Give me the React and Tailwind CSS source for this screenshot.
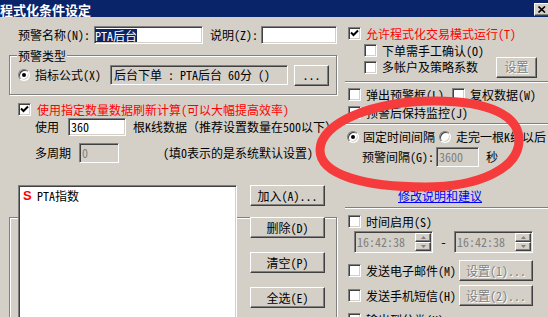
import React from "react";

const sunken =
  "border border-t-[#808080] border-l-[#808080] border-b-white border-r-white shadow-[inset_1px_1px_0_#404040,inset_-1px_-1px_0_#d4d0c8]";
const raised =
  "border border-t-white border-l-white border-b-[#404040] border-r-[#404040] shadow-[inset_-1px_-1px_0_#808080]";
const etched = "border border-[#808080] shadow-[inset_1px_1px_0_#fff,1px_1px_0_#fff]";
const grayText = "text-[#808080] [text-shadow:1px_1px_0_#fff]";

const Check = ({ checked }) => (
  <span className={`w-[13px] h-[13px] shrink-0 bg-white flex items-center justify-center ${sunken}`}>
    {checked && (
      <svg width="11" height="11" viewBox="0 0 11 11">
        <path d="M2 4.5 L4.5 7 L9 2.5" fill="none" stroke="#000" strokeWidth="2" />
      </svg>
    )}
  </span>
);

const Radio = ({ checked }) => (
  <span
    className={`w-[12px] h-[12px] shrink-0 rounded-full bg-white flex items-center justify-center ${sunken}`}
  >
    {checked && <span className="w-[4px] h-[4px] rounded-full bg-black" />}
  </span>
);

const Button = ({ children, className = "", disabled }) => (
  <div
    className={`h-[21px] shrink-0 bg-[#d4d0c8] flex items-center justify-center whitespace-nowrap ${raised} ${
      disabled ? grayText : ""
    } ${className}`}
  >
    {children}
  </div>
);

const Sep = ({ className = "" }) => (
  <div className={`h-[2px] border-t border-t-[#808080] border-b border-b-white ${className}`} />
);

const Spin = () => (
  <div className="w-[17px] h-full flex flex-col py-[1px] pr-[1px]">
    <div className={`flex-1 bg-[#d4d0c8] flex items-center justify-center ${raised}`}>
      <svg width="5" height="3" viewBox="0 0 5 3">
        <path d="M2.5 0 L5 3 L0 3Z" fill="#808080" />
      </svg>
    </div>
    <div className={`flex-1 bg-[#d4d0c8] flex items-center justify-center ${raised}`}>
      <svg width="5" height="3" viewBox="0 0 5 3">
        <path d="M0 0 L5 0 L2.5 3Z" fill="#808080" />
      </svg>
    </div>
  </div>
);

const TimeEdit = () => (
  <div className={`w-[79px] h-[22px] bg-[#d4d0c8] flex items-center ${sunken}`}>
    <span className="flex-1 pl-[2px] text-[#808080]">16:42:38</span>
    <Spin />
  </div>
);

const App = () => {
  return (
    <div className="relative w-[548px] h-[317px] overflow-hidden bg-[#d4d0c8] text-black text-[12px] leading-[14px] font-['Noto_Sans_Mono_CJK_SC','Noto_Sans_CJK_SC',sans-serif]">
      {/* title bar */}
      <div className="h-[17px] bg-[#0a246a] flex items-start justify-between">
        <span className="pt-[3px] text-white font-bold text-[13px] leading-[14px] whitespace-nowrap">
          程式化条件设定
        </span>
        <div className={`mt-[3px] -mr-[2px] w-[16px] h-[13px] bg-[#d4d0c8] flex items-center justify-center ${raised}`}>
          <svg width="8" height="7" viewBox="0 0 8 7">
            <path d="M0.5 0.5 L7 6.5 M7 0.5 L0.5 6.5" stroke="#000" strokeWidth="1.6" />
          </svg>
        </div>
      </div>

      <div className="flex items-start">
        {/* left side */}
        <div className="w-[343px] shrink-0 overflow-hidden whitespace-nowrap">
          <div className="mt-[9px] h-[18px] pl-[18px] flex items-center">
            <span className="w-[76px]">预警名称(N):</span>
            <div className={`w-[109px] h-[18px] bg-white flex items-center ${sunken}`}>
              <span className="bg-[#0a246a] text-white leading-[13px]">PTA后台</span>
            </div>
            <span className="ml-[7px] w-[51px]">说明(Z):</span>
            <div className={`w-[76px] h-[18px] bg-white ${sunken}`} />
          </div>

          <div className={`ml-[9px] mt-[11px] w-[328px] h-[40px] ${etched}`}>
            <div className="-mt-[8px] ml-[7px] w-fit px-[1px] bg-[#d4d0c8] leading-[15px]">预警类型</div>
            <div className="mt-[2px] h-[20px] pl-[8px] flex items-center">
              <Radio checked />
              <span className="ml-[5px] w-[75px]">指标公式(X)</span>
              <div className={`w-[178px] h-[20px] bg-[#d4d0c8] pl-[3px] flex items-center ${sunken}`}>
                后台下单 : PTA后台 60分 ()
              </div>
              <Button className="ml-[6px] w-[35px] h-[20px]">...</Button>
            </div>
          </div>

          <div className="mt-[8px] h-[13px] pl-[18px] flex items-center">
            <Check checked />
            <span className="ml-[6px] text-[#ff0000]">使用指定数量数据刷新计算(可以大幅提高效率)</span>
          </div>

          <div className="mt-[2px] h-[18px] pl-[35px] flex items-center">
            <span className="w-[33px]">使用</span>
            <div className={`w-[58px] h-[18px] bg-white pl-[2px] flex items-center ${sunken}`}>360</div>
            <span className="ml-[7px] w-[200px] overflow-hidden">根K线数据（推荐设置数量在500以下）</span>
          </div>

          <div className="mt-[7px] h-[20px] pl-[35px] flex items-center">
            <span className="w-[44px]">多周期</span>
            <div className={`w-[40px] h-[20px] bg-[#d4d0c8] pl-[2px] flex items-center text-[#808080] ${sunken}`}>
              0
            </div>
            <span className="ml-[44px]">(填0表示的是系统默认设置)</span>
          </div>

          <div className={`ml-[9px] mt-[54px] w-[328px] h-[140px] ${etched}`}>
            <div className="-mt-[33px] ml-[8px] flex items-start">
              <div className={`w-[219px] h-[150px] bg-white pl-[4px] pt-[3px] ${sunken}`}>
                <div className="h-[14px] flex items-center">
                  <span className="w-[14px] text-[#ff0000] font-bold text-[13px] font-['Liberation_Sans',sans-serif]">
                    S
                  </span>
                  <span>PTA指数</span>
                </div>
              </div>
              <div className="ml-[13px] w-[75px] flex flex-col">
                <Button>加入(A)...</Button>
                <Button className="mt-[11px]">删除(D)</Button>
                <Button className="mt-[14px]">清空(P)</Button>
                <Button className="mt-[14px]">全选(E)</Button>
              </div>
            </div>
          </div>
        </div>

        {/* right side */}
        <div className="w-[205px] shrink-0 whitespace-nowrap">
          <div className="mt-[10px] h-[13px] pl-[5px] flex items-center">
            <Check checked />
            <span className="ml-[5px] text-[#ff0000]">允许程式化交易模式运行(T)</span>
          </div>
          <div className="mt-[4px] h-[13px] pl-[21px] flex items-center">
            <Check />
            <span className="ml-[5px]">下单需手工确认(O)</span>
          </div>
          <div className="h-[20px] pl-[21px] flex items-center">
            <Check />
            <span className="ml-[5px]">多帐户及策略系数</span>
            <Button disabled className="ml-auto mr-[11px] w-[41px] h-[20px]">
              设置
            </Button>
          </div>

          <Sep className="mt-[4px] ml-[2px]" />

          <div className="mt-[5px] h-[13px] pl-[5px] flex items-center">
            <Check />
            <span className="ml-[5px]">弹出预警框(L)</span>
            <span className="ml-[8px]">
              <Check />
            </span>
            <span className="ml-[5px]">复权数据(W)</span>
          </div>
          <div className="mt-[5px] h-[13px] pl-[5px] flex items-center">
            <Check />
            <span className="ml-[5px]">预警后保持监控(J)</span>
          </div>

          <Sep className="mt-[4px] ml-[2px]" />

          <div className="mt-[5px] h-[13px] pl-[4px] flex items-center">
            <Radio checked />
            <span className="ml-[4px]">固定时间间隔</span>
            <span className="ml-[4px]">
              <Radio />
            </span>
            <span className="ml-[5px]">走完一根K线以后</span>
          </div>
          <div className="mt-[4px] h-[20px] pl-[19px] flex items-center">
            <span className="w-[74px]">预警间隔(G):</span>
            <div className={`w-[43px] h-[20px] bg-[#d4d0c8] pl-[2px] flex items-center text-[#808080] ${sunken}`}>
              3600
            </div>
            <span className="ml-[7px]">秒</span>
          </div>
          <div className="mt-[22px] h-[13px] pl-[55px] flex items-center">
            <span className="text-[#0000ff] underline">修改说明和建议</span>
          </div>

          <Sep className="mt-[5px] ml-[2px]" />

          <div className="mt-[6px] h-[13px] pl-[5px] flex items-center">
            <Check />
            <span className="ml-[5px]">时间启用(S)</span>
          </div>
          <div className="mt-[3px] h-[22px] pl-[11px] flex items-center">
            <TimeEdit />
            <span className="w-[21px] text-center">-</span>
            <TimeEdit />
          </div>
          <div className="mt-[7px] h-[21px] pl-[5px] flex items-center">
            <Check />
            <span className="ml-[5px]">发送电子邮件(M)</span>
            <Button disabled className="ml-auto mr-[15px] w-[74px]">
              设置(1)...
            </Button>
          </div>
          <div className="mt-[4px] h-[21px] pl-[5px] flex items-center">
            <Check />
            <span className="ml-[5px]">发送手机短信(H)</span>
            <Button disabled className="ml-auto mr-[15px] w-[74px]">
              设置(2)...
            </Button>
          </div>
          <div className="mt-[7px] h-[13px] pl-[5px] flex items-center">
            <Check />
            <span className="ml-[5px]">输出到分类(K)</span>
          </div>
        </div>
      </div>

      {/* red hand-drawn marker loop over the dialog */}
      <svg className="absolute left-0 top-0 pointer-events-none" width="548" height="317">
        <path
          d="M320 150 C320 123 372 101 435 101 C490 101 519 116 519 140 C519 168 480 187 425 187 C365 187 320 175 320 150 Z"
          fill="none"
          stroke="#f53b3b"
          strokeWidth="9"
        />
      </svg>
    </div>
  );
};

export default App;
